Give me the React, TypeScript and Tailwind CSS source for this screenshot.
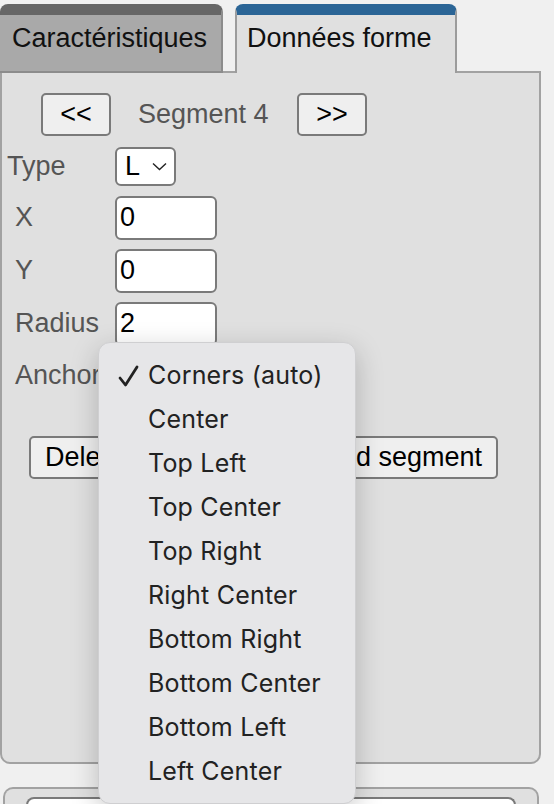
import React, { useState } from 'react';

const anchors = [
  'Corners (auto)',
  'Center',
  'Top Left',
  'Top Center',
  'Top Right',
  'Right Center',
  'Bottom Right',
  'Bottom Center',
  'Bottom Left',
  'Left Center',
];

const fields = [
  { label: 'X', value: '0' },
  { label: 'Y', value: '0' },
  { label: 'Radius', value: '2' },
];

const btn =
  'h-[43px] rounded-[5px] border-2 border-[#7a7a7a] bg-[#efefef] px-[14px] text-[27px] leading-none text-black';
const input =
  'h-[44px] w-[102px] rounded-[6px] border-2 border-[#7a7a7a] bg-white pl-[3px] text-[27px] leading-none text-black outline-none';

const App: React.FC = () => {
  const [anchor, setAnchor] = useState('Corners (auto)');

  return (
    <div className="relative min-h-screen bg-[#f0f0f0] pt-[4px] font-['Liberation_Sans',Arial,sans-serif]">
      {/* tabs */}
      <div className="relative z-10 flex items-start">
        <div className="flex h-[69px] w-[223px] items-center whitespace-nowrap rounded-t-[8px] border-t-[11px] border-r-2 border-b-2 border-t-[#666666] border-r-[#8c8c8c] border-b-[#8c8c8c] bg-[#a9a9a9] pl-[12px] pb-[9px] text-[27px] text-[#111]">
          Caractéristiques
        </div>
        <div className="ml-[12px] flex h-[69px] w-[222px] items-center whitespace-nowrap rounded-t-[8px] border-t-[11px] border-x-2 border-t-[#2b6596] border-x-[#9c9c9c] bg-[#e0e0e0] pl-[10px] pb-[11px] text-[27px] text-[#111]">
          Données forme
        </div>
      </div>

      {/* panel */}
      <div className="-mt-[2px] flex h-[693px] w-[541px] flex-col rounded-b-[10px] border-2 border-[#a2a2a2] bg-[#e0e0e0] text-[27px] text-[#555]">
        <div className="mt-[20px] flex items-center pl-[39px]">
          <button className={`${btn} w-[70px]`}>&lt;&lt;</button>
          <span className="ml-[27px] w-[159px]">Segment 4</span>
          <button className={`${btn} w-[70px]`}>&gt;&gt;</button>
        </div>

        <div className="mt-[10px] flex items-center">
          <span className="w-[113px] pl-[5px]">Type</span>
          <div className="flex h-[39px] w-[61px] items-center justify-between rounded-[6px] border-2 border-[#7a7a7a] bg-white pl-[8px] pr-[7px] text-black">
            <span>L</span>
            <svg width="15" height="9" viewBox="0 0 15 9" fill="none" stroke="#222" strokeWidth="1.4">
              <path d="M1 1.5l6.5 6 6.5-6" />
            </svg>
          </div>
        </div>

        <div className="mt-[9px] flex flex-col gap-[9px]">
          {fields.map((f) => (
            <div key={f.label} className="flex items-center">
              <span className="w-[113px] pl-[13px]">{f.label}</span>
              <input className={input} defaultValue={f.value} />
            </div>
          ))}
        </div>

        <div className="mt-[8px] flex h-[44px] items-center">
          <span className="w-[113px] pl-[13px]">Anchor</span>
          <div className="h-[40px] w-[200px] rounded-[6px] border-2 border-[#7a7a7a] bg-white" />
        </div>

        <div className="mt-[38px] flex items-center justify-between pl-[27px] pr-[41px]">
          <button className={btn}>Delete segment</button>
          <button className={btn}>Add segment</button>
        </div>
      </div>

      {/* second panel */}
      <div className="mt-[23px] ml-[3px] h-[40px] w-[536px] rounded-t-[10px] border-2 border-b-0 border-[#a2a2a2] bg-[#e0e0e0] px-[21px] pt-[8px]">
        <div className="h-[30px] rounded-t-[8px] border-2 border-b-0 border-[#7a7a7a] bg-white" />
      </div>

      {/* open anchor menu */}
      <div className="absolute left-[98px] top-[342px] z-20 w-[258px] rounded-[12px] border border-[#cfcfd1] bg-[#e6e6e8] pt-[11px] pb-[9px] font-['Inter',sans-serif] text-[25px] tracking-[0.2px] text-[#222] shadow-[0_8px_28px_rgba(0,0,0,0.22)]">
        {anchors.map((a) => (
          <div
            key={a}
            onClick={() => setAnchor(a)}
            className="flex h-[44px] items-center"
          >
            <span className="flex w-[49px] justify-end pr-[9px]">
              {anchor === a && (
                <svg width="21" height="22" viewBox="0 0 21 22" fill="none" stroke="#222" strokeWidth="2.8" strokeLinecap="round" strokeLinejoin="round">
                  <path d="M2 13l5.5 7L19 2" />
                </svg>
              )}
            </span>
            <span>{a}</span>
          </div>
        ))}
      </div>
    </div>
  );
};

export default App;
